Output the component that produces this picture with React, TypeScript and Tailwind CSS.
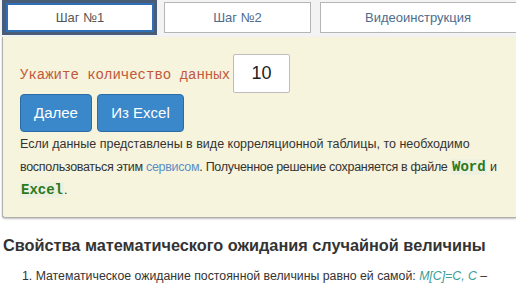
export default function App() {
  return (
    <div className="w-[516px] h-[290px] overflow-hidden bg-white font-['Liberation_Sans',Arial,sans-serif] text-[#333]">
      {/* tabs */}
      <div className="flex items-start h-[37px] bg-[#f3f3f3]">
        <div className="ml-[2px] w-[155px] h-[35px] bg-[#4a5d78] p-[3px] pl-[4px]">
          <div className="h-[29px] bg-white border-2 border-[#2f6fb8] flex items-center justify-center text-[13px] text-[#555]">
            Шаг №1
          </div>
        </div>
        <div className="ml-[7px] mt-[2px] w-[147px] h-[31px] bg-white border border-[#b5b5b5] flex items-center justify-center text-[13px] text-[#4d6c8c]">
          Шаг №2
        </div>
        <div className="ml-[9px] mt-[2px] flex-1 -mr-[20px] h-[31px] bg-white border border-[#b5b5b5] flex items-center justify-center text-[13px] text-[#4d6c8c] pr-[20px]">
          Видеоинструкция
        </div>
      </div>

      {/* panel */}
      <div className="ml-[2px] h-[181px] bg-[#f6f4dd] border-l border-b border-[#b0b0b0] rounded-bl-[3px] shadow-[0_1px_2px_rgba(0,0,0,0.25)] pl-[17px] pt-[17px] overflow-hidden">
        <div className="flex items-baseline">
          <span className="font-['Liberation_Mono',monospace] text-[14px] text-[#c2583a]">Укажите количество данных</span>
          <div className="ml-[3px] w-[57px] h-[39px] bg-white border border-[#bdbdbd] rounded-[2px] flex items-center justify-center text-[18px] text-[#222]">
            10
          </div>
        </div>
        <div className="flex gap-[5px] mt-[1px]">
          <button className="w-[72px] h-[38px] bg-[#3a87c9] border border-[#2c6ca6] rounded-[4px] text-white text-[15px]">Далее</button>
          <button className="w-[87px] h-[38px] bg-[#3a87c9] border border-[#2c6ca6] rounded-[4px] text-white text-[15px]">Из Excel</button>
        </div>
        <p className="mt-[1px] whitespace-nowrap text-[12.5px] leading-[23px] text-[#333]">
          Если данные представлены в виде корреляционной таблицы, то необходимо
          <br />
          <span className="tracking-[-0.3px]">
            воспользоваться этим <span className="text-[#5a8fc6]">сервисом</span>. Полученное решение сохраняется в файле
          </span>{' '}
          <span className="font-['Liberation_Mono',monospace] font-bold text-[14px] text-[#2a7a1c] bg-[#eef0e0] px-[1px]">Word</span> и
          <br />
          <span className="font-['Liberation_Mono',monospace] font-bold text-[14px] text-[#2a7a1c] bg-[#eef0e0] px-[1px]">Excel</span>.
        </p>
      </div>

      {/* section */}
      <h2 className="mt-[15px] ml-[3px] text-[16.3px] font-bold text-[#333] whitespace-nowrap">
        Свойства математического ожидания случайной величины
      </h2>
      <ol className="mt-[10px] ml-[22px] text-[12.3px] text-[#333] whitespace-nowrap">
        <li>
          1. Математическое ожидание постоянной величины равно ей самой:{' '}
          <span className="italic text-[#3a9e9a]">M[C]=C, C</span> –
        </li>
      </ol>
    </div>
  );
}
